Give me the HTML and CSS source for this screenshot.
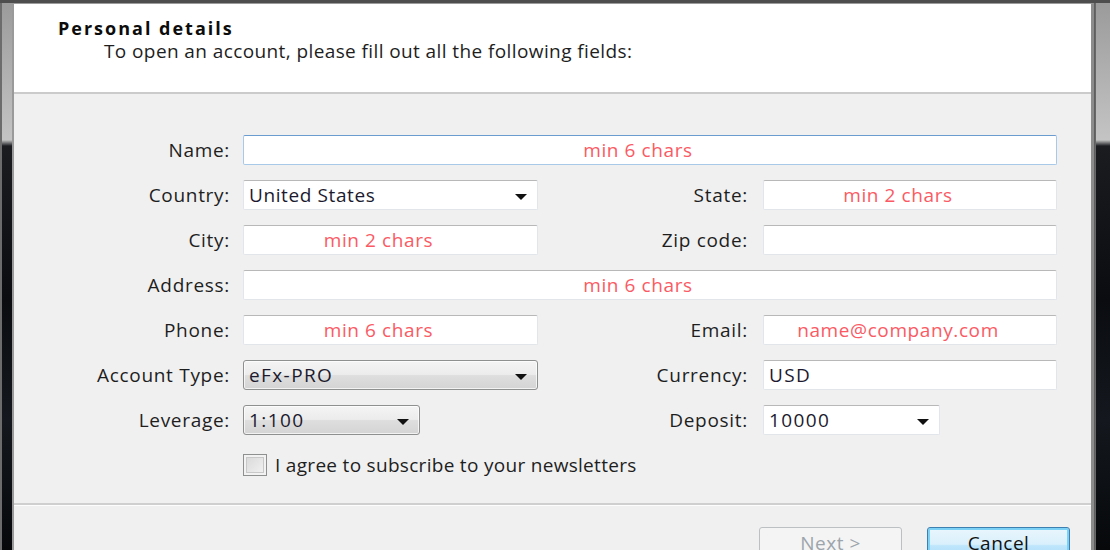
FILE: index.html
```html
<!DOCTYPE html>
<html lang="en">
<head>
<meta charset="utf-8">
<title>Personal details</title>
<link rel="stylesheet" href="styles.css">
</head>
<body>
<div class="window">
  <header class="head">
    <h1 class="title">Personal details</h1>
    <p class="subtitle">To open an account, please fill out all the following fields:</p>
  </header>
  <main class="form">
    <label class="lbl">Name:</label>
    <div class="field wide focus"><span class="ph">min 6 chars</span></div>

    <label class="lbl">Country:</label>
    <div class="field combo"><span class="val val-tight">United States</span><span class="arrow"></span></div>
    <label class="lbl lbl2">State:</label>
    <div class="field"><span class="ph">min 2 chars</span></div>

    <label class="lbl">City:</label>
    <div class="field"><span class="ph">min 2 chars</span></div>
    <label class="lbl lbl2">Zip code:</label>
    <div class="field"></div>

    <label class="lbl">Address:</label>
    <div class="field wide"><span class="ph">min 6 chars</span></div>

    <label class="lbl">Phone:</label>
    <div class="field"><span class="ph">min 6 chars</span></div>
    <label class="lbl lbl2">Email:</label>
    <div class="field"><span class="ph">name@company.com</span></div>

    <label class="lbl">Account Type:</label>
    <div class="field combo button-combo"><span class="val">eFx-PRO</span><span class="arrow"></span></div>
    <label class="lbl lbl2">Currency:</label>
    <div class="field"><span class="val">USD</span></div>

    <label class="lbl">Leverage:</label>
    <div class="field combo button-combo short"><span class="val">1:100</span><span class="arrow"></span></div>
    <label class="lbl lbl2">Deposit:</label>
    <div class="field combo short"><span class="val">10000</span><span class="arrow"></span></div>

    <div class="agree">
      <span class="check"></span>
      <span class="agree-text">I agree to subscribe to your newsletters</span>
    </div>
  </main>
  <footer class="foot">
    <button class="btn btn-disabled">Next &gt;</button>
    <button class="btn btn-default">Cancel</button>
  </footer>
</div>
</body>
</html>
```
FILE: styles.css
```css
html, body {
  margin: 0;
  padding: 0;
}
body {
  width: 1110px;
  height: 550px;
  overflow: hidden;
  background:
    linear-gradient(to bottom, #4e4e4e 0, #4e4e4e 3px, transparent 3px),
    linear-gradient(to right, #6c6c6c 0, #6c6c6c 2px, transparent 2px, transparent 1094px, #5a5a5a 1094px, #6c6c6c 1096px, transparent 1096px),
    linear-gradient(to bottom, #9a9a9a 0, #c4c4c4 140px, #1a1c20 146px, #0a0c10 300px, #14181e 420px, #06080a 550px);
  font-family: "Open Sans", "Liberation Sans", sans-serif;
  color: #1e1e1e;
}
.window {
  margin: 3px 16px 0 12px;
  border-top: 1px solid #9c9c9c;
  border-left: 2px solid #9a9a9a;
  border-right: 3px solid #8c8c8c;
  background: #f0f0f0;
  min-height: 600px;
}
.head {
  background: #ffffff;
  box-sizing: border-box;
  height: 90px;
  border-bottom: 2px solid #cbcbcb;
  padding: 13px 0 0 44px;
}
.title {
  margin: 0;
  font-size: 18px;
  font-weight: 700;
  letter-spacing: 2px;
  line-height: 22px;
  color: #0c0c0c;
}
.subtitle {
  margin: 0 0 0 46px;
  font-size: 19px;
  letter-spacing: 0.4px;
  line-height: 24px;
  color: #1e1e1e;
}
.form {
  display: grid;
  grid-template-columns: 229px 295px 225px 294px;
  grid-auto-rows: 30px;
  row-gap: 15px;
  padding: 41px 0 23px 0;
  border-bottom: 2px solid #cfcfcf;
}
.lbl {
  display: flex;
  align-items: center;
  justify-content: flex-end;
  padding-right: 13px;
  font-size: 19px;
  letter-spacing: 0.7px;
  white-space: nowrap;
}
.lbl2 {
  padding-right: 15px;
}
.field {
  position: relative;
  display: flex;
  align-items: center;
  justify-content: center;
  background: #ffffff;
  border: 1px solid #e2e5ea;
  border-top-color: #b8b8b8;
  border-radius: 2px;
  box-sizing: border-box;
  padding: 0 26px 0 2px;
  font-size: 19px;
  white-space: nowrap;
}
.field.wide {
  grid-column: 2 / span 3;
}
.field.focus {
  border-color: #a9c9e8;
  border-top-color: #6b9ccf;
}
.field .val {
  flex: 1;
  padding-left: 3px;
  letter-spacing: 1.4px;
  color: #1c1a2e;
}
.field .val-tight {
  letter-spacing: 0.6px;
}
.field.combo {
  justify-content: flex-start;
  padding-right: 0;
}
.ph {
  color: #fb5a64;
  letter-spacing: 0.6px;
}
.arrow {
  width: 0;
  height: 0;
  margin: 4px 10px 0 6px;
  border-left: 6px solid transparent;
  border-right: 6px solid transparent;
  border-top: 6px solid #111;
}
.button-combo {
  background: linear-gradient(to bottom, #f4f4f4 0%, #ececec 48%, #dedede 52%, #d4d4d4 100%);
  border: 1px solid #8e8f8f;
  border-radius: 3px;
  box-shadow: inset 0 0 0 1px rgba(255,255,255,0.7);
}
.short {
  width: 177px;
}
.agree {
  grid-column: 2 / span 3;
  display: flex;
  align-items: center;
  gap: 8px;
}
.check {
  width: 22px;
  height: 20px;
  border: 1px solid #8e8f8f;
  background: linear-gradient(135deg, #d6d6d6 0%, #f4f4f4 100%);
  box-shadow: inset 0 0 0 2px #f2f2f2, inset 0 0 0 3px #c8c8c8;
}
.agree-text {
  font-size: 19px;
  letter-spacing: 0.3px;
}
.foot {
  display: flex;
  justify-content: flex-end;
  gap: 25px;
  padding: 21px 21px 0 0;
  border-top: 1px solid #fdfdfd;
}
.btn {
  width: 143px;
  height: 36px;
  font-family: "Open Sans", "Liberation Sans", sans-serif;
  font-size: 19px;
  letter-spacing: 0.5px;
  border-radius: 3px;
  padding: 0 0 4px 0;
}
.btn-disabled {
  background: #f4f4f4;
  border: 1px solid #bcc0c3;
  color: #9ca4ac;
}
.btn-default {
  background: linear-gradient(to bottom, #eaf6fd 0%, #d9f0fc 48%, #bee6fd 52%, #a7d9f5 100%);
  border: 1px solid #3c7fb1;
  box-shadow: inset 0 0 0 2px #7bd1f6;
  color: #111;
}
```
